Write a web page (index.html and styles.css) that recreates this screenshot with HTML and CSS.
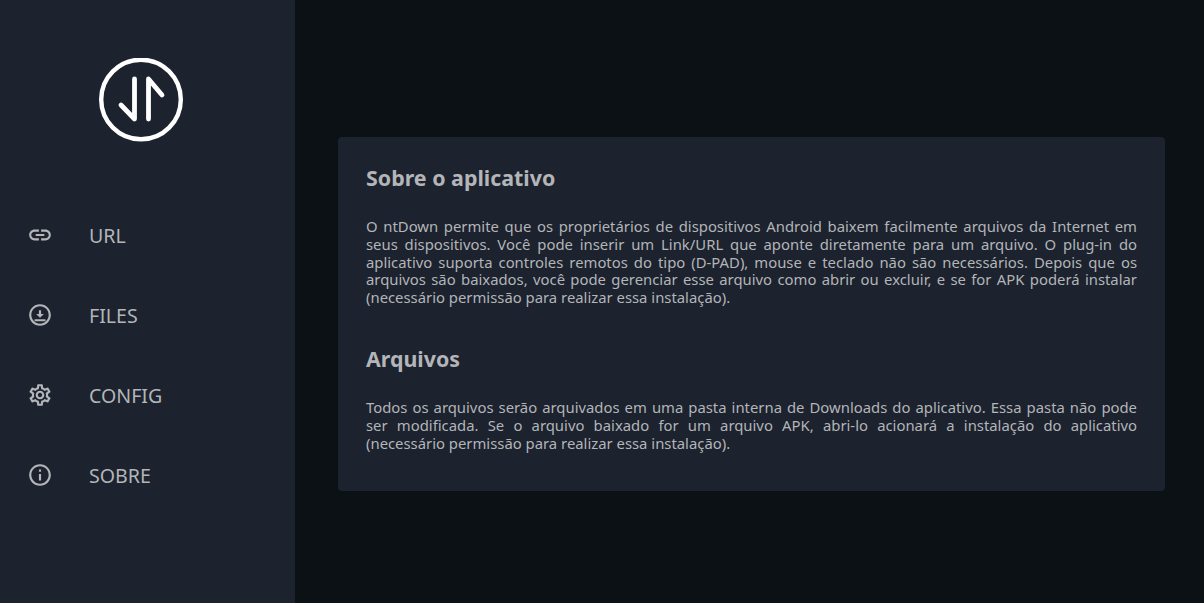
FILE: index.html
```html
<!DOCTYPE html>
<html lang="pt-BR">
  <head>
    <meta charset="utf-8">
    <title>ntDown</title>
    <link rel="stylesheet" href="styles.css">
  </head>
  <body>
    <aside class="sidebar">
      <div class="logo">
        <svg width="84" height="84" viewBox="0 0 84 84" fill="none" stroke="#fff" stroke-linecap="round" stroke-linejoin="round">
          <circle cx="42" cy="41.5" r="39.800" stroke-width="4.400"/>
          <path d="M35.5 21V61L22 47" stroke-width="4.800"/>
          <path d="M49.5 61V21L63 37" stroke-width="4.800"/>
        </svg>
      </div>
      <nav class="menu">
        <a class="menu-item">
          <svg class="icon" viewBox="0 0 24 24" fill="currentColor"><path d="M3.9 12c0-1.71 1.39-3.1 3.1-3.1h4V7H7c-2.76 0-5 2.24-5 5s2.24 5 5 5h4v-1.9H7c-1.71 0-3.1-1.39-3.1-3.1zM8 13h8v-2H8v2zm9-6h-4v1.9h4c1.71 0 3.1 1.39 3.1 3.1s-1.39 3.1-3.1 3.1h-4V17h4c2.76 0 5-2.24 5-5s-2.24-5-5-5z"/></svg>
          <span>URL</span>
        </a>
        <a class="menu-item">
          <svg class="icon" viewBox="0 0 24 24" fill="currentColor"><path d="M12 2C6.49 2 2 6.49 2 12s4.49 10 10 10 10-4.49 10-10S17.51 2 12 2zm0 18c-4.41 0-8-3.59-8-8s3.59-8 8-8 8 3.59 8 8-3.59 8-8 8zm-1-12.500h2V11h2.600L12 14.600 8.400 11H11V7.500zM7 16h10v1.800H7z"/></svg>
          <span>FILES</span>
        </a>
        <a class="menu-item">
          <svg class="icon" viewBox="0 0 24 24" fill="currentColor"><path d="M19.43 12.98c.04-.32.07-.64.07-.98s-.03-.66-.07-.98l2.11-1.65c.19-.15.24-.42.12-.64l-2-3.46c-.12-.22-.39-.3-.61-.22l-2.49 1c-.52-.4-1.08-.73-1.69-.98l-.38-2.65C14.46 2.18 14.25 2 14 2h-4c-.25 0-.46.18-.49.42l-.38 2.65c-.61.25-1.17.59-1.69.98l-2.49-1c-.23-.09-.49 0-.61.22l-2 3.46c-.13.22-.07.49.12.64l2.11 1.65c-.04.32-.07.65-.07.98s.03.66.07.98l-2.11 1.65c-.19.15-.24.42-.12.64l2 3.46c.12.22.39.3.61.22l2.49-1c.52.4 1.08.73 1.69.98l.38 2.65c.03.24.24.42.49.42h4c.25 0 .46-.18.49-.42l.38-2.65c.61-.25 1.17-.59 1.69-.98l2.49 1c.23.09.49 0 .61-.22l2-3.46c.12-.22.07-.49-.12-.64l-2.11-1.65zm-1.98-1.71c.04.31.05.52.05.73 0 .21-.02.43-.05.73l-.14 1.13.89.7 1.08.84-.7 1.21-1.27-.51-1.04-.42-.9.68c-.43.32-.84.56-1.25.73l-1.06.43-.16 1.13-.2 1.35h-1.4l-.19-1.35-.16-1.13-1.06-.43c-.43-.18-.83-.41-1.23-.71l-.91-.7-1.06.43-1.27.51-.7-1.21 1.08-.84.89-.7-.14-1.13c-.03-.31-.05-.54-.05-.74s.02-.43.05-.73l.14-1.13-.89-.7-1.08-.84.7-1.21 1.27.51 1.04.42.9-.68c.43-.32.84-.56 1.25-.73l1.06-.43.16-1.13.2-1.35h1.39l.19 1.35.16 1.13 1.06.43c.43.18.83.41 1.23.71l.91.7 1.06-.43 1.27-.51.7 1.21-1.07.85-.89.7.14 1.13zM12 8c-2.21 0-4 1.79-4 4s1.79 4 4 4 4-1.79 4-4-1.79-4-4-4zm0 6c-1.1 0-2-.9-2-2s.9-2 2-2 2 .9 2 2-.9 2-2 2z"/></svg>
          <span>CONFIG</span>
        </a>
        <a class="menu-item">
          <svg class="icon" viewBox="0 0 24 24" fill="currentColor"><path d="M11 7h2v2h-2zm0 4h2v6h-2zm1-9C6.48 2 2 6.48 2 12s4.48 10 10 10 10-4.48 10-10S17.52 2 12 2zm0 18c-4.41 0-8-3.59-8-8s3.59-8 8-8 8 3.59 8 8-3.59 8-8 8z"/></svg>
          <span>SOBRE</span>
        </a>
      </nav>
    </aside>
    <main class="content">
      <section class="card">
        <h2>Sobre o aplicativo</h2>
        <p>O ntDown permite que os proprietários de dispositivos Android baixem facilmente arquivos da Internet em seus dispositivos. Você pode inserir um Link/URL que aponte diretamente para um arquivo. O plug-in do aplicativo suporta controles remotos do tipo (D-PAD), mouse e teclado não são necessários. Depois que os arquivos são baixados, você pode gerenciar esse arquivo como abrir ou excluir, e se for APK poderá instalar (necessário permissão para realizar essa instalação).</p>
        <h2>Arquivos</h2>
        <p>Todos os arquivos serão arquivados em uma pasta interna de Downloads do aplicativo. Essa pasta não pode ser modificada. Se o arquivo baixado for um arquivo APK, abri-lo acionará a instalação do aplicativo (necessário permissão para realizar essa instalação).</p>
      </section>
    </main>
  </body>
</html>
```

FILE: styles.css
```css
* {
  box-sizing: border-box;
}
body {
  margin: 0;
  display: flex;
  height: 603px;
  overflow: hidden;
  background: #0c1115;
  color: #b3b5b8;
  font-family: "Noto Sans", sans-serif;
}
.sidebar {
  width: 295px;
  background: #1c222e;
  padding-top: 58px;
}
.logo {
  height: 84px;
  display: flex;
  justify-content: center;
  padding-right: 13px;
}
.menu {
  margin-top: 53px;
}
.menu-item {
  height: 80px;
  display: flex;
  align-items: center;
  padding-left: 27px;
  font-size: 19.6px;
  gap: 36px;
}
.icon {
  width: 26px;
  height: 26px;
}
.content {
  flex: 1;
  display: flex;
  align-items: center;
  padding: 0 39px 0 43px;
}
.card {
  width: 100%;
  height: 354px;
  margin-top: 25px;
  background: #1c222e;
  border-radius: 4px;
  padding: 28px;
}
h2 {
  margin: 0;
  font-size: 21.4px;
  line-height: 26px;
  font-weight: 700;
}
p {
  margin: 27px 0 39.5px;
  font-size: 14.85px;
  line-height: 17.75px;
  text-align: justify;
}
p:last-child {
  margin-bottom: 0;
}
```
